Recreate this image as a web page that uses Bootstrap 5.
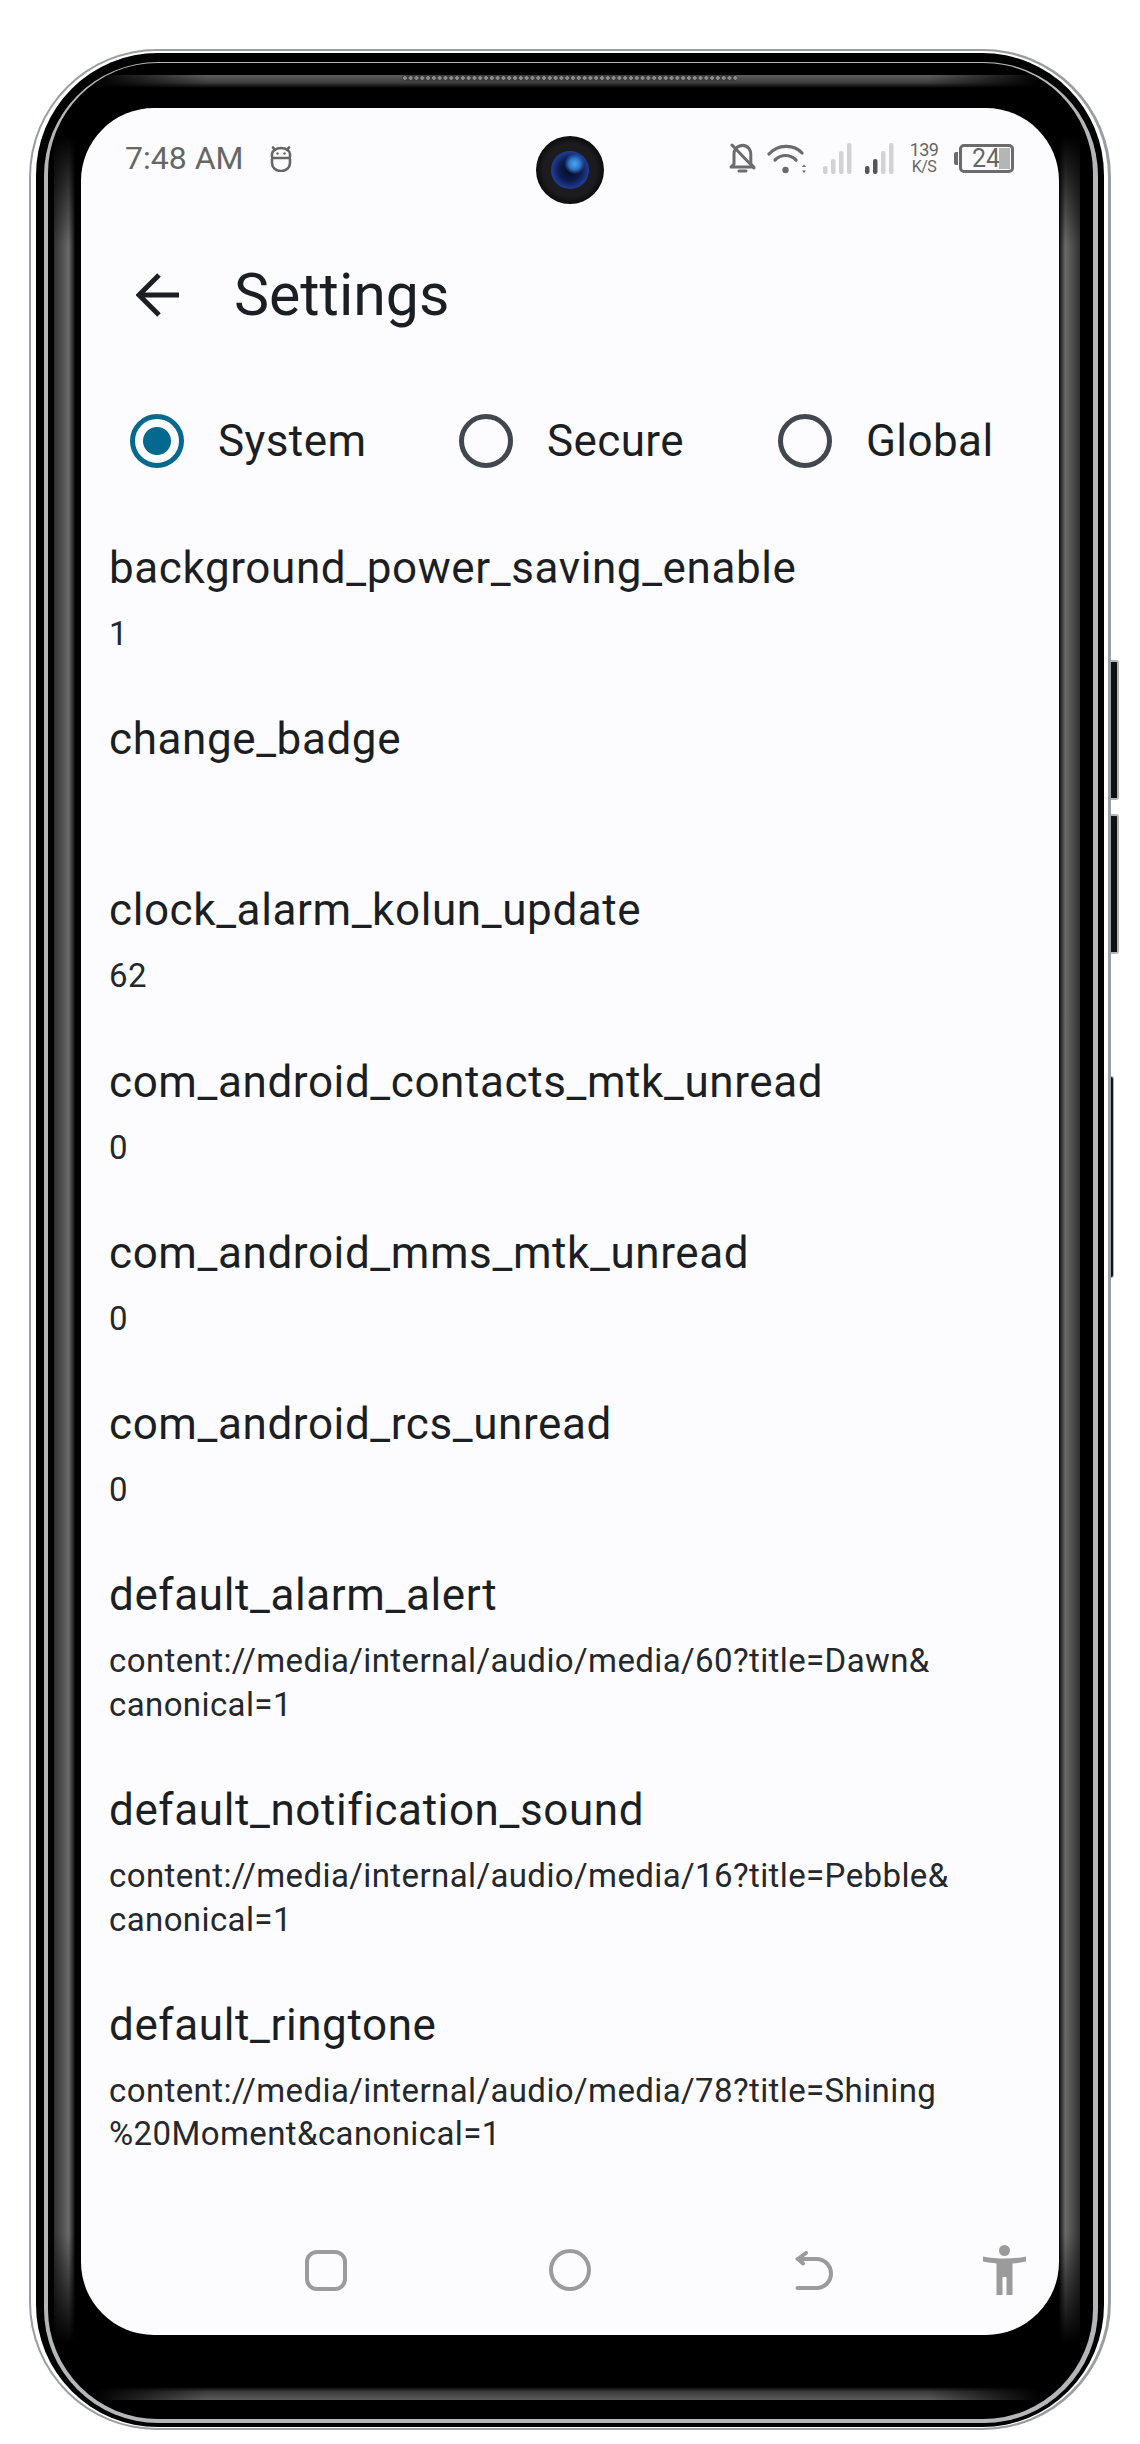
<!DOCTYPE html>
<html lang="en">
<head>
  <meta charset="utf-8">
  <title>Settings</title>
  <link rel="stylesheet" href="https://cdn.jsdelivr.net/npm/bootstrap@5.3.0/dist/css/bootstrap.min.css">
  <style>
    html, body { background: #fff; }
    body { font-family: Roboto, "Liberation Sans", sans-serif; color: #1b1f23; padding: 49px 29px 14px 29px; }

    /* phone body: nested layers, each one is a ring of the frame */
    .phone-edge { position: relative; width: 1082px; height: 2381px; background: #9a9ea2; border-radius: 128px; padding: 2px 3px 2px 2px; }
    .phone-glass { height: 100%; background: #fff; border-radius: 126px; padding: 2px 4px 1px 5px; }
    .phone-band { height: 100%; background: #000; border-radius: 122px; padding: 9px 6px 4px 8px; }
    .phone-rim { height: 100%; background: #b4b6b8; border-radius: 114px; padding: 1px 5px 4px 4px; }
    .phone-inner { height: 100%; background: #000; border-radius: 110px; padding: 12px 11px 15px 6px; }
    .phone-sheen { position: relative; height: 100%; border-radius: 100px; padding: 33px 23px 69px 27px; background: #000; }

    /* grey reflections on the frame, they fade out towards the corners */
    .sheen-band { position: absolute; }
    .sheen-top, .sheen-bottom { left: 40px; right: 40px; height: 13px;
      -webkit-mask-image: linear-gradient(90deg, transparent 0, #000 12%, #000 88%, transparent 100%);
      mask-image: linear-gradient(90deg, transparent 0, #000 12%, #000 88%, transparent 100%); }
    .sheen-top { top: 0; background: linear-gradient(180deg, #5e5e5e, #3c3c3c 60%, #000); }
    .sheen-bottom { bottom: 4px; background: linear-gradient(0deg, #5c5c5c, #3a3a3a 65%, #000); }
    .sheen-left, .sheen-right { top: 60px; bottom: 60px; width: 21px;
      -webkit-mask-image: linear-gradient(180deg, transparent 0, #000 5%, #000 95%, transparent 100%);
      mask-image: linear-gradient(180deg, transparent 0, #000 5%, #000 95%, transparent 100%); }
    .sheen-left { left: 0; background: linear-gradient(90deg, #303030, #6a6a6a 70%, #1c1c1c 95%, #000); }
    .sheen-right { right: 2px; background: linear-gradient(270deg, #303030, #6a6a6a 70%, #1c1c1c 95%, #000); }
    .phone-speaker {
      position: absolute; left: 348px; top: 0; width: 335px; height: 6px; border-radius: 3px;
      background-color: #3c3c3c;
      background-image: radial-gradient(circle, #8a8a8a 1.6px, transparent 2px);
      background-size: 5.8px 6px;
    }
    .side-key { position: absolute; right: -8px; width: 8px; background: #111; border: 2px solid #b4b4b4; border-left: 0; border-radius: 0 3px 3px 0; }
    .side-key-up { top: 611px; height: 140px; }
    .side-key-down { top: 765px; height: 140px; }
    .side-key-thin { top: 1027px; height: 202px; width: 3px; right: -3px; border-width: 1px; }

    .phone-screen { position: relative; height: 100%; background: #fcfcfe; border-radius: 73px; overflow: hidden; }

    /* status bar */
    .status-row { height: 32px; margin-top: 34px; padding: 0 44px; color: #666; }
    .status-time { font-size: 32px; line-height: 32px; width: 144px; }
    .status-bell { margin-left: 436px; }
    .status-wifi { margin-left: 11px; }
    .status-sig-a { margin-left: 16px; }
    .status-sig-b { margin-left: 13px; }
    .status-speed { width: 30px; font-size: 18px; line-height: 17px; letter-spacing: -.6px; text-align: center; margin-left: 15px; }
    .status-speed span { display: block; }
    .status-speed span + span { font-size: 16px; }
    .batt-box { position: relative; width: 55px; height: 29px; border: 3px solid #6b6b6b; border-radius: 5px; margin-left: 1px; font-size: 25px; line-height: 23px; padding-left: 10px; }
    .batt-box::after { content: ""; position: absolute; right: 1px; top: 1px; bottom: 1px; width: 11px; background: #b5b5b5; }
    .batt-nub { width: 4px; height: 13px; background: #6b6b6b; border-radius: 2px 0 0 2px; margin-left: 15px; }

    .front-cam {
      position: absolute; left: 455px; top: 28px; width: 68px; height: 68px; border-radius: 50%;
      background: radial-gradient(circle, #1c1c20 55%, #0a0a0c 72%, #18181b 96%);
    }
    .front-lens {
      width: 38px; height: 38px; border-radius: 50%;
      background:
        radial-gradient(circle at 62% 34%, #4aa6ee 0, #2f78cc 16%, transparent 30%),
        radial-gradient(circle at 50% 50%, #060a1c 0, #0e1c50 42%, #2442a0 74%, #2c4cb0 84%, #0c1230 100%);
    }

    /* app bar */
    .app-row { height: 64px; margin-top: 89px; padding-left: 55px; }
    .app-title { font-size: 59px; line-height: 64px; margin: 0 0 0 54px; font-weight: 400; }

    /* radios */
    .radio-row { height: 56px; margin-top: 86px; }
    .radio-pick { display: flex; align-items: center; margin: 0; padding: 0; min-height: 0; }
    .radio-pick .form-check-input {
      float: none; margin: 0; width: 54px; height: 54px; border: 5.5px solid #42474d;
      background-color: transparent; background-image: none;
    }
    .radio-pick .form-check-input:checked {
      border-color: #04698f; background-color: transparent;
      background-image: radial-gradient(circle, #04698f 13.5px, transparent 14.5px);
    }
    .radio-pick .form-check-label { font-size: 44px; line-height: 56px; letter-spacing: .4px; margin-left: 34px; }
    .radio-system { margin-left: 49px; width: 329px; }
    .radio-secure { width: 319px; }

    /* settings rows */
    .set-list { margin-top: 56px; background: transparent; }
    .set-row { background: transparent; border: 0; padding: 0 0 0 28px; color: inherit; }
    .set-name { font-size: 44px; line-height: 56px; letter-spacing: .6px; padding-top: 15px; margin: 0; font-weight: 400; }
    .set-value { font-size: 33px; line-height: 43.6px; letter-spacing: .4px; min-height: 100.2px; padding-top: 16px; padding-bottom: 40.6px; color: #24282c; }

    /* bottom nav */
    .nav-keys { position: absolute; left: 0; right: 0; bottom: 37px; height: 56px; padding-left: 224px; }
    .nav-keys svg { flex: none; }
    .key-home { margin-left: 202px; }
    .key-back { margin-left: 204px; }
    .key-access { margin-left: 150px; }
  </style>
</head>
<body>
  <div class="phone-edge">
    <div class="phone-glass"><div class="phone-band"><div class="phone-rim"><div class="phone-inner">
      <div class="phone-sheen">
        <div class="sheen-band sheen-top"></div>
        <div class="sheen-band sheen-bottom"></div>
        <div class="sheen-band sheen-left"></div>
        <div class="sheen-band sheen-right"></div>
        <div class="phone-speaker"></div>
        <div class="phone-screen d-flex flex-column">

          <div class="status-row d-flex align-items-center">
            <div class="status-time">7:48 AM</div>
            <svg width="24" height="28" viewBox="0 0 24 28" fill="none" stroke="#666" stroke-width="2.6">
              <path d="M4 3.500 6 6M20 3.500 18 6" stroke-linecap="round"/>
              <path d="M3 13V10a9 6 0 0 1 18 0v3M2 14h20M3 15v4a9 8 0 0 0 18 0v-4"/>
              <circle cx="8.500" cy="9.500" r="1.200" fill="#666" stroke="none"/>
              <circle cx="15.500" cy="9.500" r="1.200" fill="#666" stroke="none"/>
            </svg>
            <svg class="status-bell" width="27" height="30" viewBox="0 0 27 30" fill="none" stroke="#6b6b6b" stroke-width="3">
              <path d="M5 21V11a8.500 8.500 0 0 1 15-5.500c1.500 2 1.800 3.500 1.800 6V21l3 3H2z" stroke-linejoin="round"/>
              <path d="M3 2 25 25" stroke-linecap="round"/>
              <path d="M10 28h7" stroke-linecap="round"/>
            </svg>
            <svg class="status-wifi" width="40" height="31" viewBox="0 0 40 31" fill="none" stroke="#6b6b6b" stroke-width="3.200" stroke-linecap="round">
              <path d="M2 11C11 1 27 1 35 10"/>
              <path d="M8 17c6-6 15-6 21 0"/>
              <circle cx="18.500" cy="27" r="3.200" fill="#6b6b6b" stroke="none"/>
              <path d="M37 21.500 35 24h4zM37 30l-2-2.500h4z" fill="#6b6b6b" stroke="none"/>
            </svg>
            <svg class="status-sig-a" width="29" height="31" viewBox="0 0 29 31" fill="#d2d2d2">
              <rect x="0" y="23" width="4.500" height="8" rx="2"/>
              <rect x="8" y="16" width="4.500" height="15" rx="2"/>
              <rect x="16" y="8" width="4.500" height="23" rx="2"/>
              <rect x="24" y="0" width="4.500" height="31" rx="2"/>
            </svg>
            <svg class="status-sig-b" width="29" height="31" viewBox="0 0 29 31" fill="#d2d2d2">
              <rect x="0" y="23" width="4.500" height="8" rx="2" fill="#555"/>
              <rect x="8" y="16" width="4.500" height="15" rx="2" fill="#555"/>
              <rect x="16" y="8" width="4.500" height="23" rx="2"/>
              <rect x="24" y="0" width="4.500" height="31" rx="2"/>
            </svg>
            <div class="status-speed"><span>139</span><span>K/S</span></div>
            <div class="batt-nub"></div>
            <div class="batt-box">24</div>
          </div>

          <div class="front-cam d-flex align-items-center justify-content-center"><div class="front-lens"></div></div>

          <div class="app-row d-flex align-items-center">
            <svg width="44" height="44" viewBox="0 0 44 44" fill="none" stroke="#1b1f23" stroke-width="5">
              <path d="M43 22H4"/>
              <path d="M23 2 3 22l20 20"/>
            </svg>
            <h1 class="app-title">Settings</h1>
          </div>

          <div class="radio-row d-flex align-items-center">
            <div class="form-check radio-pick radio-system">
              <input class="form-check-input" type="radio" name="scope" id="scopeSystem" checked>
              <label class="form-check-label" for="scopeSystem">System</label>
            </div>
            <div class="form-check radio-pick radio-secure">
              <input class="form-check-input" type="radio" name="scope" id="scopeSecure">
              <label class="form-check-label" for="scopeSecure">Secure</label>
            </div>
            <div class="form-check radio-pick">
              <input class="form-check-input" type="radio" name="scope" id="scopeGlobal">
              <label class="form-check-label" for="scopeGlobal">Global</label>
            </div>
          </div>

          <div class="list-group list-group-flush set-list">
            <div class="list-group-item set-row"><h2 class="set-name">background_power_saving_enable</h2><div class="set-value">1</div></div>
            <div class="list-group-item set-row"><h2 class="set-name">change_badge</h2><div class="set-value"></div></div>
            <div class="list-group-item set-row"><h2 class="set-name">clock_alarm_kolun_update</h2><div class="set-value">62</div></div>
            <div class="list-group-item set-row"><h2 class="set-name">com_android_contacts_mtk_unread</h2><div class="set-value">0</div></div>
            <div class="list-group-item set-row"><h2 class="set-name">com_android_mms_mtk_unread</h2><div class="set-value">0</div></div>
            <div class="list-group-item set-row"><h2 class="set-name">com_android_rcs_unread</h2><div class="set-value">0</div></div>
            <div class="list-group-item set-row"><h2 class="set-name">default_alarm_alert</h2><div class="set-value">content://media/internal/audio/media/60?title=Dawn&amp;<br>canonical=1</div></div>
            <div class="list-group-item set-row"><h2 class="set-name">default_notification_sound</h2><div class="set-value">content://media/internal/audio/media/16?title=Pebble&amp;<br>canonical=1</div></div>
            <div class="list-group-item set-row"><h2 class="set-name">default_ringtone</h2><div class="set-value">content://media/internal/audio/media/78?title=Shining<br>%20Moment&amp;canonical=1</div></div>
          </div>

          <div class="nav-keys d-flex align-items-center">
            <svg width="42" height="41" viewBox="0 0 42 41" fill="none" stroke="#9b9b9b" stroke-width="4">
              <rect x="2" y="2" width="38" height="37" rx="10"/>
            </svg>
            <svg class="key-home" width="42" height="42" viewBox="0 0 42 42" fill="none" stroke="#9b9b9b" stroke-width="4">
              <circle cx="21" cy="21" r="19"/>
            </svg>
            <svg class="key-back" width="38" height="39" viewBox="0 0 38 39" fill="none" stroke="#9b9b9b" stroke-width="4" stroke-linecap="round">
              <path d="M2.500 37h19a14.500 14.500 0 0 0 0-29H3"/>
              <path d="M11 2 3 8l5 4.500"/>
            </svg>
            <svg class="key-access" width="43" height="50" viewBox="0 0 43 50" fill="#9b9b9b">
              <circle cx="21.500" cy="5.500" r="5.500"/>
              <path d="M0 11.500c7 1.500 14.500 2 21.500 2s14.500-.5 21.500-2l.5 5c-5 1-9.500 1.600-14 2V50h-6V32h-4v18h-6V18.500C9.500 18 5 17.500 0 16.500z"/>
            </svg>
          </div>
        </div>
      </div>
    </div></div></div></div>
    <div class="side-key side-key-up"></div>
    <div class="side-key side-key-down"></div>
    <div class="side-key side-key-thin"></div>
  </div>
  <script src="https://cdn.jsdelivr.net/npm/bootstrap@5.3.0/dist/js/bootstrap.bundle.min.js"></script>
</body>
</html>
